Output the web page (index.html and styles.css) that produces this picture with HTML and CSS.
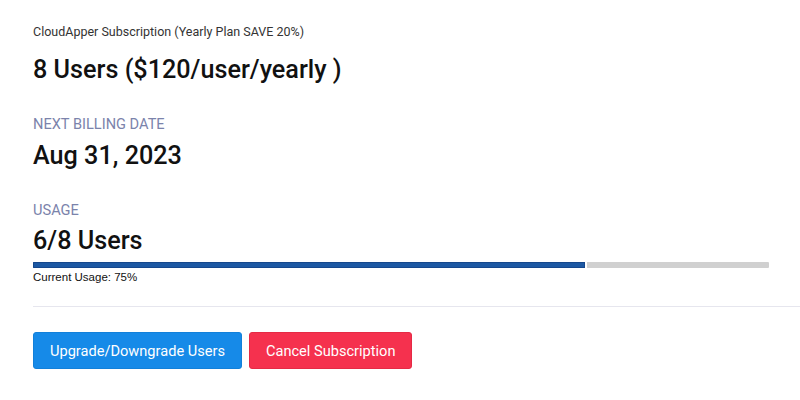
FILE: index.html
```html
<!DOCTYPE html>
<html lang="en">
<head>
    <meta charset="UTF-8">
    <meta name="viewport" content="width=device-width, initial-scale=1.0">
    <title>Subscription</title>
    <link rel="stylesheet" href="styles.css">
</head>
<body>
    <div class="subscription">
        <div class="plan-name">CloudApper Subscription (Yearly Plan SAVE 20%)</div>
        <div class="big-value plan-users">8 Users ($120/user/yearly )</div>

        <div class="label">NEXT BILLING DATE</div>
        <div class="big-value">Aug 31, 2023</div>

        <div class="label">USAGE</div>
        <div class="big-value usage-value">6/8 Users</div>
        <div class="progress">
            <div class="progress-fill" style="width: 75%"></div>
        </div>
        <div class="usage-note">Current Usage: 75%</div>

        <hr class="divider">

        <div class="actions">
            <button class="btn btn-primary">Upgrade/Downgrade Users</button>
            <button class="btn btn-danger">Cancel Subscription</button>
        </div>
    </div>
</body>
</html>
```

FILE: styles.css
```css
body {
    margin: 0;
    padding: 0;
    background: #ffffff;
    font-family: Roboto, 'Liberation Sans', sans-serif;
    color: #111111;
}

.subscription {
    padding: 24px 0 0 33px;
}

.plan-name {
    font-size: 12.5px;
    line-height: 15px;
    color: #333333;
}

.big-value {
    font-size: 25.2px;
    font-weight: 500;
    line-height: 30px;
    color: #111111;
    margin-top: 8px;
}

.plan-users {
    margin-top: 16px;
}

.usage-value {
    margin-top: 7px;
}

.label {
    font-size: 14.6px;
    line-height: 18px;
    color: #7b83ab;
    margin-top: 30px;
}

.progress {
    width: 736px;
    height: 6px;
    margin-top: 6px;
    background: #d0d0d0;
    border-radius: 1px;
    overflow: hidden;
}

.progress-fill {
    height: 100%;
    background: #1c58a3;
    box-shadow: inset 0 0 0 1px #15478c;
    border-right: 2px solid #ffffff;
}

.usage-note {
    font-family: 'Liberation Sans', Arial, sans-serif;
    font-size: 11.5px;
    line-height: 13px;
    color: #111111;
    margin-top: 3px;
}

.divider {
    border: none;
    border-top: 1px solid #e6e6ee;
    margin: 22px 0 0 0;
}

.actions {
    display: flex;
    gap: 7px;
    margin-top: 25px;
}

.btn {
    font-family: Roboto, 'Liberation Sans', sans-serif;
    font-size: 14.6px;
    color: #ffffff;
    height: 37px;
    padding: 0 16px;
    border-radius: 3px;
    cursor: pointer;
}

.btn-primary {
    background: #168ae8;
    border: 1px solid #1280da;
}

.btn-danger {
    background: #f5314e;
    border: 1px solid #e52a45;
}
```
